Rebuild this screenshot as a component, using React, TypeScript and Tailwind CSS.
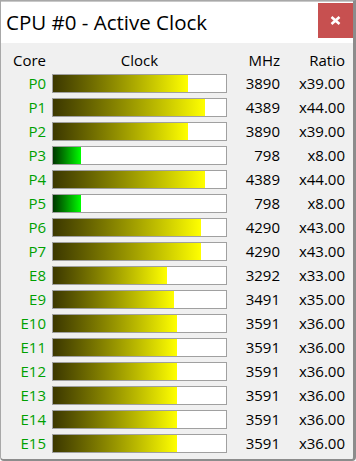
import React from 'react';

type Core = { name: string; mhz: number; ratio: string };

const cores: Core[] = [
  { name: 'P0', mhz: 3890, ratio: 'x39.00' },
  { name: 'P1', mhz: 4389, ratio: 'x44.00' },
  { name: 'P2', mhz: 3890, ratio: 'x39.00' },
  { name: 'P3', mhz: 798, ratio: 'x8.00' },
  { name: 'P4', mhz: 4389, ratio: 'x44.00' },
  { name: 'P5', mhz: 798, ratio: 'x8.00' },
  { name: 'P6', mhz: 4290, ratio: 'x43.00' },
  { name: 'P7', mhz: 4290, ratio: 'x43.00' },
  { name: 'E8', mhz: 3292, ratio: 'x33.00' },
  { name: 'E9', mhz: 3491, ratio: 'x35.00' },
  { name: 'E10', mhz: 3591, ratio: 'x36.00' },
  { name: 'E11', mhz: 3591, ratio: 'x36.00' },
  { name: 'E12', mhz: 3591, ratio: 'x36.00' },
  { name: 'E13', mhz: 3591, ratio: 'x36.00' },
  { name: 'E14', mhz: 3591, ratio: 'x36.00' },
  { name: 'E15', mhz: 3591, ratio: 'x36.00' },
];

const MAX_MHZ = 5000;

function ClockBar({ mhz }: { mhz: number }) {
  const pct = Math.min(100, (mhz / MAX_MHZ) * 100);
  // low clocks (idle cores) are drawn green, the rest yellow
  const idle = mhz < 1000;
  return (
    <div className="w-[175px] h-[19px] border border-[#a0a0a0] bg-white">
      <div
        className={
          idle
            ? 'h-full bg-gradient-to-r from-[#003800] to-[#00ff00]'
            : 'h-full bg-gradient-to-r from-[#3c3800] to-[#ffff00]'
        }
        style={{ width: `${pct}%` }}
      />
    </div>
  );
}

function App() {
  return (
    <div
      className="w-[356px] h-[461px] bg-[#f0f0f0] border-l border-t border-[#a8a8a8] border-r-[3px] border-b-[2px] border-r-[#8c8c8c] border-b-[#8c8c8c] rounded-b-[4px] overflow-hidden"
      style={{ fontFamily: '"Open Sans", "Noto Sans", sans-serif' }}
    >
      <div className="h-[42px] bg-white flex items-start justify-between border-t border-[#c8c8c8]">
        <div className="pl-[5px] pt-[7px] text-[20.5px] leading-[26px] text-black">CPU #0 - Active Clock</div>
        <div className="mt-[1px] w-[35px] h-[35px] bg-[#c75050] flex items-center justify-center">
          <svg width="11" height="9" viewBox="0 0 11 9">
            <path d="M1.5 1 L9.5 8 M9.5 1 L1.5 8" stroke="white" strokeWidth="2.6" />
          </svg>
        </div>
      </div>

      <div className="pt-[7px] text-[15px] text-black">
        <div className="flex items-center h-[21px]">
          <div className="w-[45px] text-right">Core</div>
          <div className="ml-[6px] w-[175px] text-center">Clock</div>
          <div className="w-[53px] text-right">MHz</div>
          <div className="w-[65px] text-right">Ratio</div>
        </div>
        {cores.map((c) => (
          <div key={c.name} className="flex items-center h-[24px]">
            <div className="w-[45px] text-right text-[#00a000]">{c.name}</div>
            <div className="ml-[6px]">
              <ClockBar mhz={c.mhz} />
            </div>
            <div className="w-[53px] text-right">{c.mhz}</div>
            <div className="w-[65px] text-right">{c.ratio}</div>
          </div>
        ))}
      </div>
    </div>
  );
}

export default App;
